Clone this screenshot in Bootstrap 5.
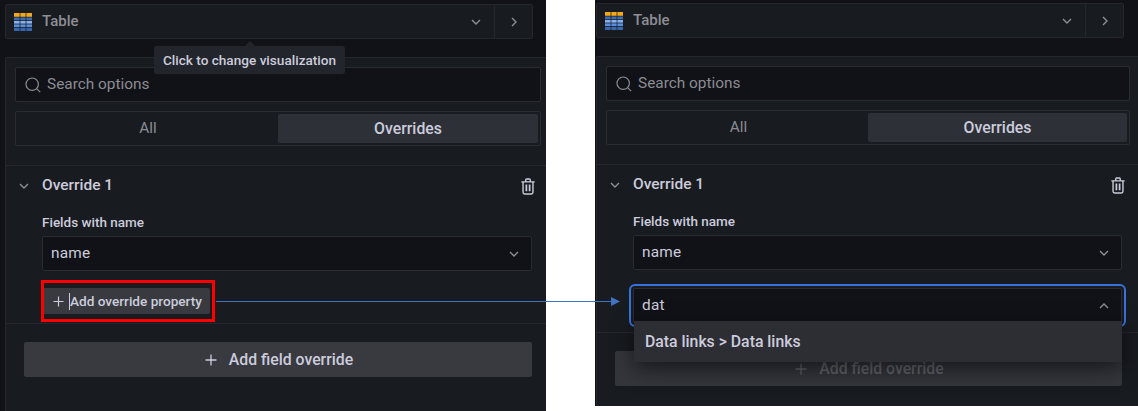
<!DOCTYPE html>
<html lang="en">
  <head>
    <meta charset="UTF-8" />
    <meta name="viewport" content="width=device-width, initial-scale=1.0" />
    <title>Table overrides</title>

    <link
      href="https://cdn.jsdelivr.net/npm/bootstrap@5.3.0/dist/css/bootstrap.min.css"
      rel="stylesheet"
    />

    <style>
      body {
        background: #fff;
        font-family: Roboto, "Liberation Sans", sans-serif;
        font-size: 15px;
        color: #ccccdc;
        position: relative;
        height: 411px;
        overflow: hidden;
      }

      .pane {
        background: #111217;
        flex: none;
      }
      .pane-left {
        width: 546px;
        height: 411px;
        padding: 4px 0 0 5px;
        --edge: 14px;
        --search-edge: 5px;
        --prop-gap: 17px;
      }
      .pane-right {
        width: 543px;
        height: 406px;
        margin-left: 49px;
        padding: 3px 0 0 1px;
        --edge: 16px;
        --search-edge: 8px;
        --prop-gap: 18px;
      }

      /* visualization picker */
      .viz-bar {
        width: 528px;
        height: 35px;
        background: #181b1f;
        border: 1px solid #25272c;
        border-radius: 2px;
      }
      .viz-name {
        color: #8e8e95;
        font-weight: 500;
        font-size: 15px;
        margin-left: 2px;
      }
      .viz-toggle {
        width: 38px;
        border-left: 1px solid #25272c;
      }
      .viz-chevron {
        color: #8e8e95;
      }
      .viz-down {
        margin-right: 13px;
      }

      .viz-tip {
        position: absolute;
        left: 154px;
        top: 46px;
        width: 191px;
        height: 28px;
        background: #22252b;
        border-radius: 3px;
        color: #ccccdc;
        font-size: 13.6px;
        font-weight: 500;
        z-index: 3;
      }
      .viz-tip::before {
        content: "";
        position: absolute;
        left: 90px;
        top: -5px;
        border: 6px solid transparent;
        border-top: 0;
        border-bottom-color: #22252b;
      }

      /* options panel */
      .opts {
        margin-top: 18px;
        flex: 1 1 0;
        background: #181b1f;
        border: 1px solid #25272c;
        border-right: 0;
        border-bottom: 0;
        border-radius: 2px 0 0 0;
      }
      .opts-head {
        padding: 9px var(--search-edge) 19px 9px;
        border-bottom: 1px solid #25272c;
      }
      .field-box {
        height: 35px;
        background: #111217;
        border: 1px solid #2a2c31;
        border-radius: 2px;
      }
      .search-box {
        color: #8b8c93;
        font-size: 15.4px;
        padding-left: 9px;
      }
      .search-box svg {
        margin-right: 6px;
      }
      .tab-strip {
        margin-top: 9px;
        padding: 2px;
        background: transparent;
      }
      .tab-item {
        flex: 1 1 0;
        color: #8b8c93;
        font-size: 15.4px;
      }
      .tab-item-on {
        background: #2d3037;
        color: #ccccdc;
        font-weight: 500;
        font-size: 15.8px;
        border-radius: 2px;
      }

      .override {
        padding: 0 var(--edge) 9px 13px;
        border-bottom: 1px solid #25272c;
      }
      .override-row {
        height: 40px;
      }
      .override-title {
        font-weight: 500;
        font-size: 15.5px;
        margin-left: 13px;
      }
      .override-chevron {
        color: #8e8e95;
      }
      .override-trash {
        margin-right: -3px;
      }
      .override-body {
        margin-left: 23px;
      }
      .field-label {
        font-size: 13.5px;
        font-weight: 500;
        line-height: 16px;
        margin: 8px 0 6px;
      }
      .select-box {
        padding: 0 12px 0 8px;
        font-size: 15.4px;
        letter-spacing: 0.2px;
      }
      .select-box svg {
        color: #8e8e95;
      }

      .prop-slot {
        position: relative;
        margin-top: var(--prop-gap);
      }
      .prop-btn {
        width: 168px;
        height: 26px;
        background: #383a40;
        border: 0;
        border-radius: 2px;
        color: #ccccdc;
        font-size: 13.6px;
        font-weight: 500;
        padding: 0 0 0 11px;
      }
      .text-caret {
        display: inline-block;
        width: 1px;
        height: 17px;
        margin: 0 0 0 5px;
        background: #ccccdc;
      }
      .callout {
        position: absolute;
        left: -1px;
        top: -8px;
        width: 174px;
        height: 42px;
        border: 3px solid #f00;
        pointer-events: none;
      }

      .focus-box {
        position: relative;
        outline: 2px solid #3871dc;
        outline-offset: 2px;
        border-radius: 2px;
      }
      .menu-drop {
        position: absolute;
        left: 1px;
        right: 0;
        top: 33px;
        height: 41px;
        background: #2d2e34;
        color: #ccccdc;
        font-weight: 500;
        font-size: 15.8px;
        padding-left: 11px;
        box-shadow: 0 6px 22px rgba(0, 0, 0, 0.6);
        z-index: 2;
      }

      .add-slot {
        padding: 18px var(--edge) 0 18px;
      }
      .add-btn {
        width: 100%;
        height: 35px;
        background: #383a40;
        border: 0;
        border-radius: 2px;
        color: #ccccdc;
        font-size: 15.8px;
        font-weight: 500;
        padding-left: 8px;
      }
      .add-btn-dim {
        background: #34363c;
        color: #64656c;
      }

      .link-arrow {
        position: absolute;
        left: 0;
        top: 0;
        z-index: 4;
        pointer-events: none;
      }
    </style>
  </head>
  <body class="d-flex align-items-start">
    <svg width="0" height="0" class="position-absolute">
      <symbol id="ico-down" viewBox="0 0 10 6">
        <path d="M1 1l4 4 4-4" fill="none" stroke="currentColor" stroke-width="1.4" />
      </symbol>
      <symbol id="ico-up" viewBox="0 0 10 6">
        <path d="M1 5l4-4 4 4" fill="none" stroke="currentColor" stroke-width="1.4" />
      </symbol>
      <symbol id="ico-right" viewBox="0 0 6 10">
        <path d="M1 1l4 4-4 4" fill="none" stroke="currentColor" stroke-width="1.4" />
      </symbol>
      <symbol id="ico-search" viewBox="0 0 16 16">
        <circle cx="7.2" cy="7.2" r="6.2" fill="none" stroke="currentColor" stroke-width="1.2" />
        <path d="M11.8 11.8l3.4 3.4" stroke="currentColor" stroke-width="1.2" />
      </symbol>
      <symbol id="ico-plus" viewBox="0 0 12 12">
        <path d="M6 .5v11M.5 6h11" stroke="currentColor" stroke-width="1.3" />
      </symbol>
      <symbol id="ico-trash" viewBox="0 0 13 15">
        <path
          d="M.3 3.2h12.4M4.4 3V1.4c0-.4.3-.8.8-.8h2.6c.5 0 .8.4.8.8V3M1.9 3.2v9.6c0 .9.6 1.6 1.5 1.6h6.2c.9 0 1.5-.7 1.5-1.6V3.2"
          fill="none"
          stroke="currentColor"
          stroke-width="1.3"
        />
        <path d="M5 5.6v6.4M8 5.6v6.4" stroke="currentColor" stroke-width="1.6" />
      </symbol>
      <symbol id="ico-table" viewBox="0 0 18 18">
        <rect x="0" y="0" width="18" height="4" fill="#f2a81d" />
        <rect x="0" y="4" width="18" height="3.5" fill="#3d6bb0" />
        <rect x="0" y="7.5" width="18" height="3.5" fill="#84aff1" />
        <rect x="0" y="11" width="18" height="3.5" fill="#5a8fdc" />
        <rect x="0" y="14.5" width="18" height="3.5" fill="#3a66ad" />
        <path d="M6 0v18M12 0v18M0 4.2h18M0 7.5h18M0 11h18M0 14.5h18" stroke="#181b1f" stroke-width=".7" />
      </symbol>
    </svg>

    <!-- before -->
    <section class="pane pane-left d-flex flex-column">
      <div class="viz-bar d-flex align-items-center flex-shrink-0">
        <svg class="ms-2 me-2" width="18" height="18"><use href="#ico-table" /></svg>
        <span class="viz-name flex-grow-1">Table</span>
        <svg class="viz-chevron viz-down" width="10" height="6"><use href="#ico-down" /></svg>
        <div class="viz-toggle viz-chevron d-flex align-items-center justify-content-center align-self-stretch">
          <svg width="6" height="10"><use href="#ico-right" /></svg>
        </div>
      </div>
      <div class="viz-tip d-flex align-items-center justify-content-center">Click to change visualization</div>

      <div class="opts">
        <div class="opts-head">
          <div class="field-box search-box d-flex align-items-center">
            <svg width="16" height="16"><use href="#ico-search" /></svg>
            Search options
          </div>
          <div class="field-box tab-strip d-flex">
            <div class="tab-item d-flex align-items-center justify-content-center">All</div>
            <div class="tab-item tab-item-on d-flex align-items-center justify-content-center">Overrides</div>
          </div>
        </div>
        <div class="override">
          <div class="override-row d-flex align-items-center">
            <svg class="override-chevron" width="10" height="6"><use href="#ico-down" /></svg>
            <span class="override-title flex-grow-1">Override 1</span>
            <svg class="override-trash" width="14" height="17"><use href="#ico-trash" /></svg>
          </div>
          <div class="override-body">
            <div class="field-label">Fields with name</div>
            <div class="field-box select-box d-flex align-items-center justify-content-between">
              name
              <svg width="10" height="6"><use href="#ico-down" /></svg>
            </div>
            <div class="prop-slot">
              <button class="prop-btn d-flex align-items-center" type="button">
                <svg width="11" height="11"><use href="#ico-plus" /></svg>
                <span class="text-caret"></span>Add override property
              </button>
              <div class="callout"></div>
            </div>
          </div>
        </div>
        <div class="add-slot">
          <button class="add-btn d-flex align-items-center justify-content-center gap-2" type="button">
            <svg class="me-1" width="12" height="12"><use href="#ico-plus" /></svg>
            Add field override
          </button>
        </div>
      </div>
    </section>

    <!-- after -->
    <section class="pane pane-right d-flex flex-column">
      <div class="viz-bar d-flex align-items-center flex-shrink-0">
        <svg class="ms-2 me-2" width="18" height="18"><use href="#ico-table" /></svg>
        <span class="viz-name flex-grow-1">Table</span>
        <svg class="viz-chevron viz-down" width="10" height="6"><use href="#ico-down" /></svg>
        <div class="viz-toggle viz-chevron d-flex align-items-center justify-content-center align-self-stretch">
          <svg width="6" height="10"><use href="#ico-right" /></svg>
        </div>
      </div>

      <div class="opts">
        <div class="opts-head">
          <div class="field-box search-box d-flex align-items-center">
            <svg width="16" height="16"><use href="#ico-search" /></svg>
            Search options
          </div>
          <div class="field-box tab-strip d-flex">
            <div class="tab-item d-flex align-items-center justify-content-center">All</div>
            <div class="tab-item tab-item-on d-flex align-items-center justify-content-center">Overrides</div>
          </div>
        </div>
        <div class="override">
          <div class="override-row d-flex align-items-center">
            <svg class="override-chevron" width="10" height="6"><use href="#ico-down" /></svg>
            <span class="override-title flex-grow-1">Override 1</span>
            <svg class="override-trash" width="14" height="17"><use href="#ico-trash" /></svg>
          </div>
          <div class="override-body">
            <div class="field-label">Fields with name</div>
            <div class="field-box select-box d-flex align-items-center justify-content-between">
              name
              <svg width="10" height="6"><use href="#ico-down" /></svg>
            </div>
            <div class="prop-slot">
              <div class="field-box select-box focus-box d-flex align-items-center justify-content-between">
                dat
                <svg width="10" height="6"><use href="#ico-up" /></svg>
              </div>
              <div class="menu-drop d-flex align-items-center">Data links &gt; Data links</div>
            </div>
          </div>
        </div>
        <div class="add-slot">
          <button class="add-btn add-btn-dim d-flex align-items-center justify-content-center gap-2" type="button">
            <svg class="me-1" width="12" height="12"><use href="#ico-plus" /></svg>
            Add field override
          </button>
        </div>
      </div>
    </section>

    <svg class="link-arrow" width="1138" height="411">
      <path d="M216 301.5h397" stroke="#3f74c4" stroke-width="1" />
      <path d="M611 297l9 4.5-9 4.5z" fill="#3f74c4" />
    </svg>

    <script src="https://cdn.jsdelivr.net/npm/bootstrap@5.3.0/dist/js/bootstrap.bundle.min.js"></script>
  </body>
</html>
